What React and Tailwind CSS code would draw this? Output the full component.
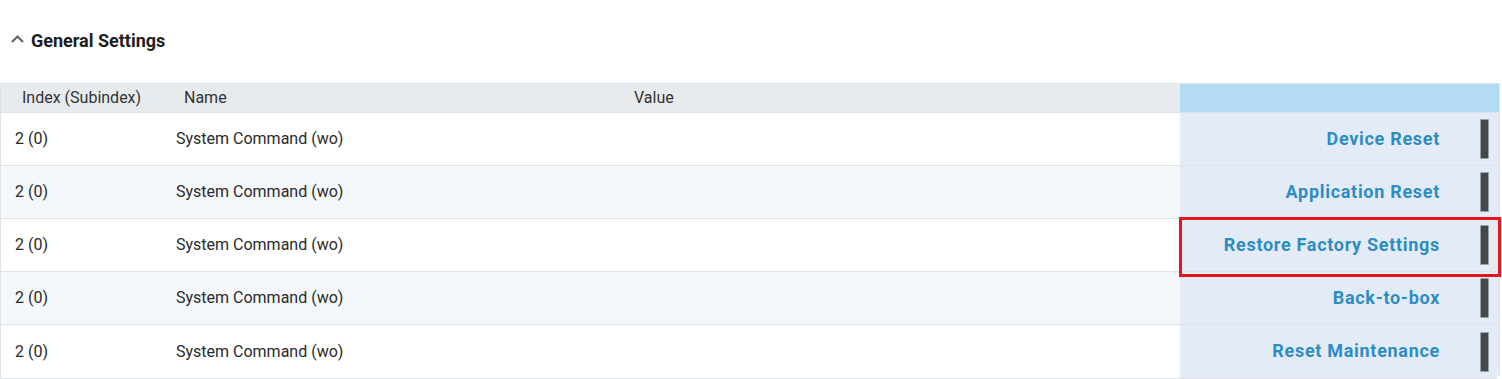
import React from "react";

const rows = [
  "Device Reset",
  "Application Reset",
  "Restore Factory Settings",
  "Back-to-box",
  "Reset Maintenance",
];

export default function App() {
  return (
    <div className="w-[1502px] h-[379px] bg-white text-[#222] overflow-hidden" style={{ fontFamily: "Roboto, 'Liberation Sans', sans-serif" }}>
      <div className="h-[83px] flex items-start pt-[30px] pl-[10px]">
        <div className="flex items-center gap-[6px]">
          <svg width="15" height="10" viewBox="0 0 15 10" className="mt-[-4px]">
            <path d="M2 8 L7.5 2.5 L13 8" fill="none" stroke="#666" strokeWidth="2.2" />
          </svg>
          <span className="text-[18px] font-bold text-[#1e1e1e] leading-[22px]">General Settings</span>
        </div>
      </div>
      <div className="w-[1500px] border border-[#dfe2e6] rounded-br-[5px]">
        <div className="grid grid-cols-[162px_450px_1fr_319px] h-[29px] text-[16px] text-[#333] border-b border-[#dfe2e6]">
          <div className="bg-[#e8ebee] pl-[21px] flex items-center pb-[1px]">Index (Subindex)</div>
          <div className="bg-[#e8ebee] pl-[21px] flex items-center pb-[1px]">Name</div>
          <div className="bg-[#e8ebee] pl-[21px] flex items-center pb-[1px]">Value</div>
          <div className="bg-[#b3dbf4]"></div>
        </div>
        {rows.map((label, i) => (
          <div
            key={label}
            className={`grid grid-cols-[162px_450px_1fr_319px] h-[53px] text-[16px] text-[#2a2a2a] ${i < rows.length - 1 ? "border-b border-[#dfe2e6]" : ""} ${i % 2 === 1 ? "bg-[#f5f8fb]" : "bg-white"}`}
          >
            <div className="pl-[14px] flex items-center">2 (0)</div>
            <div className="pl-[13px] flex items-center">System Command (wo)</div>
            <div></div>
            <div className={`relative bg-[#e3ecf6] flex items-center justify-end pr-[10px] ${i === rows.length - 1 ? "rounded-br-[4px]" : ""}`}>
              <span className="text-[18px] font-bold text-[#2e8cc4] tracking-[0.7px] mr-[40px] pb-[2px]">{label}</span>
              <div className="w-[9px] h-[40px] bg-[#44474c] border border-[#9aa0a6] rounded-[1px]"></div>
              {i === 2 && (
                <div className="absolute z-10 left-[-1px] top-[-2px] w-[322px] h-[60px] border-[3px] border-[#e8141b] pointer-events-none"></div>
              )}
            </div>
          </div>
        ))}
      </div>
    </div>
  );
}
